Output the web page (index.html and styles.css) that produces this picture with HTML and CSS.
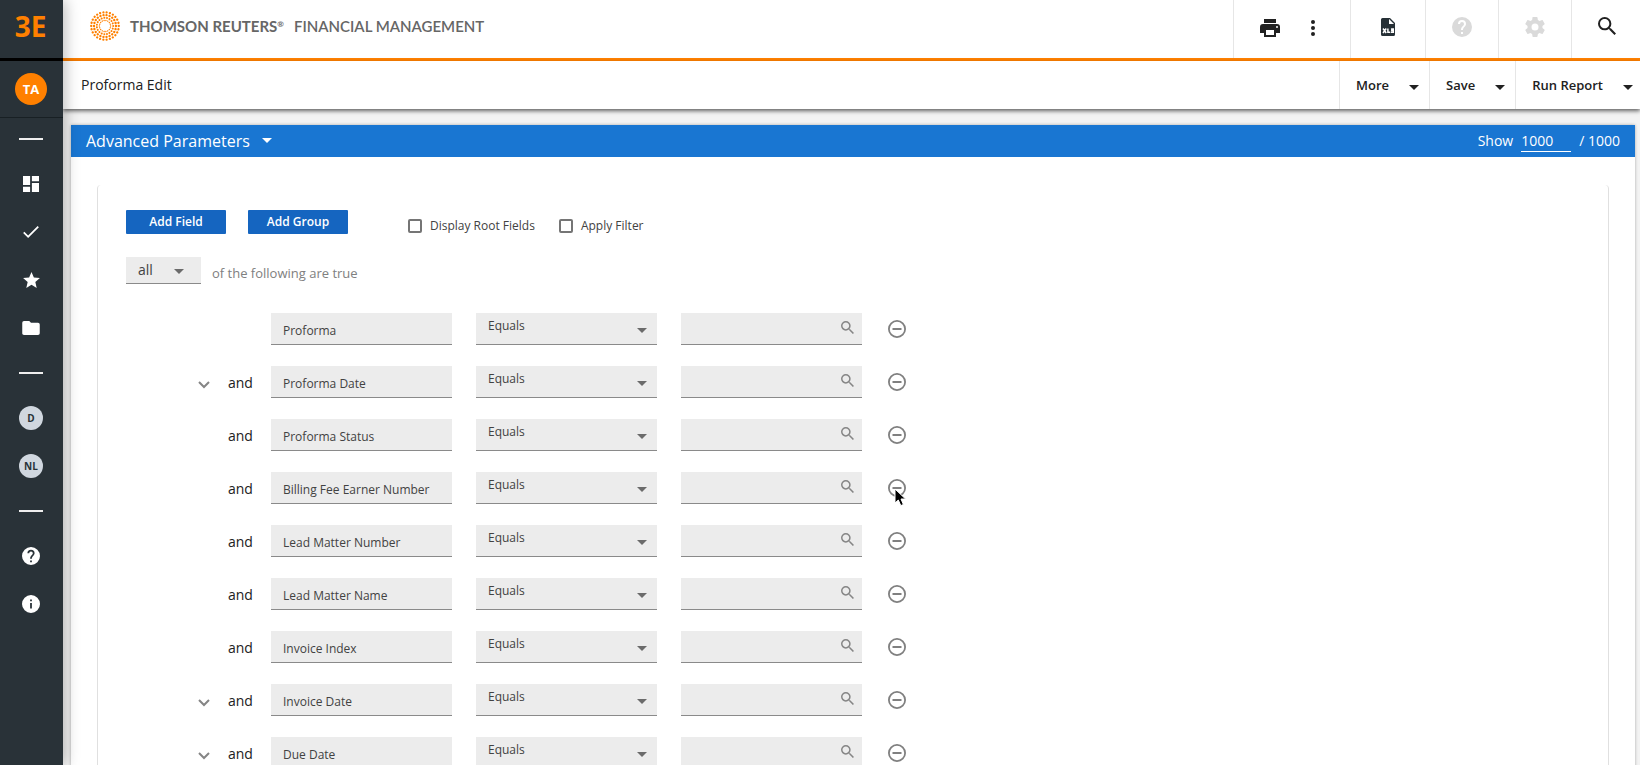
FILE: index.html
```html
<!DOCTYPE html>
<html lang="en">
<head>
<meta charset="utf-8">
<title>Proforma Edit</title>
<link rel="stylesheet" href="styles.css">
</head>
<body>
<svg class="sprite" aria-hidden="true">
  <symbol id="caret" viewBox="0 0 10 5"><path d="M0 0h10L5 5z"/></symbol>
  <symbol id="chevron" viewBox="0 0 12 8"><path d="M1 1l5 5 5-5" fill="none" stroke="currentColor" stroke-width="2"/></symbol>
  <symbol id="search" viewBox="3 3 17.5 17.5"><path d="M15.5 14h-.79l-.28-.27A6.47 6.47 0 0 0 16 9.500 6.500 6.500 0 1 0 9.500 16c1.610 0 3.090-.59 4.230-1.570l.27.28v.79l5 4.990L20.490 19l-4.990-5zm-6 0C7.010 14 5 11.990 5 9.500S7.010 5 9.500 5 14 7.010 14 9.500 11.990 14 9.500 14z"/></symbol>
  <symbol id="minus" viewBox="2 2 20 20"><path d="M7 11v2h10v-2H7zm5-9a10 10 0 1 0 0 20 10 10 0 0 0 0-20zm0 18a8 8 0 1 1 0-16 8 8 0 0 1 0 16z"/></symbol>
  <symbol id="help" viewBox="2 2 20 20"><path d="M12 2a10 10 0 1 0 0 20 10 10 0 0 0 0-20zm1 17h-2v-2h2v2zm2.070-7.750l-.9.920C13.450 12.900 13 13.500 13 15h-2v-.5c0-1.100.45-2.100 1.170-2.830l1.240-1.260c.37-.36.59-.86.59-1.410a2 2 0 1 0-4 0H8a4 4 0 1 1 8 0c0 .88-.36 1.680-.93 2.250z"/></symbol>
</svg>
<div class="app">
  <nav class="rail" aria-label="Main">
    <a class="rail-logo" href="#">3E</a>
    <div class="rail-user"><button class="avatar">TA</button></div>
    <ul class="rail-list">
      <li class="dash"></li>
      <li><button aria-label="Dashboard"><svg width="16" height="16" viewBox="3 3 18 18"><path d="M3 13h8V3H3v10zm0 8h8v-6H3v6zm10 0h8V11h-8v10zm0-18v6h8V3h-8z"/></svg></button></li>
      <li><button aria-label="Tasks"><svg width="16" height="12" viewBox="3.400 5.600 17.600 13.400"><path d="M9 16.200L4.800 12l-1.400 1.400L9 19 21 7l-1.400-1.400L9 16.200z"/></svg></button></li>
      <li><button aria-label="Favorites"><svg width="17" height="16" viewBox="2 2 20 19"><path d="M12 17.270L18.180 21l-1.640-7.030L22 9.240l-7.190-.61L12 2 9.190 8.630 2 9.240l5.460 4.730L5.820 21z"/></svg></button></li>
      <li><button aria-label="Folders"><svg width="18" height="14" viewBox="2 4 20 16"><path d="M10 4H4a2 2 0 0 0-2 2v12c0 1.100.9 2 2 2h16a2 2 0 0 0 2-2V8a2 2 0 0 0-2-2h-8l-2-2z"/></svg></button></li>
      <li class="dash"></li>
      <li><button class="chip">D</button></li>
      <li><button class="chip">NL</button></li>
      <li class="dash"></li>
      <li><button aria-label="Help"><svg width="18" height="18"><use href="#help"/></svg></button></li>
      <li><button aria-label="About"><svg width="18" height="18" viewBox="2 2 20 20"><path d="M12 2a10 10 0 1 0 0 20 10 10 0 0 0 0-20zm1 15h-2v-6h2v6zm0-8h-2V7h2v2z"/></svg></button></li>
    </ul>
  </nav>
  <div class="page">
    <header class="topbar">
      <div class="brand">
        <svg class="brand-mark" width="32" height="30" viewBox="-16 -15 32 30">
          <circle r="13.800" stroke-width="2.300" pathLength="26" stroke-dasharray="0.010 0.990"/>
          <circle r="11" stroke-width="2.400" pathLength="22" stroke-dasharray="0.010 0.990"/>
          <circle r="8.200" stroke-width="2" pathLength="19" stroke-dasharray="0.010 0.990"/>
          <circle r="5.600" stroke-width="1.400" pathLength="18" stroke-dasharray="0.010 0.990"/>
        </svg>
        <span class="brand-name">THOMSON REUTERS<sup>®</sup></span>
        <span class="brand-product">FINANCIAL MANAGEMENT</span>
      </div>
      <div class="tools">
        <div class="tool tool-pair">
          <button aria-label="Print"><svg width="20" height="18" viewBox="2 3 20 18"><path d="M19 8H5a3 3 0 0 0-3 3v6h4v4h12v-4h4v-6a3 3 0 0 0-3-3zm-3 11H8v-5h8v5zm3-7a1 1 0 1 1 0-2 1 1 0 0 1 0 2zm-1-9H6v4h12V3z"/></svg></button>
          <button aria-label="More actions"><svg width="4" height="16" viewBox="0 0 4 16"><circle cx="2" cy="2" r="2"/><circle cx="2" cy="8" r="2"/><circle cx="2" cy="14" r="2"/></svg></button>
        </div>
        <div class="tool tool-xls"><button aria-label="Export to XLS"><svg width="14" height="18" viewBox="0 0 14 18"><path fill="#263036" d="M1.500 0H9l5 5v11.500a1.500 1.500 0 0 1-1.500 1.500h-11A1.500 1.500 0 0 1 0 16.500v-15A1.500 1.500 0 0 1 1.500 0z"/><path fill="#fff" d="M8 1v5h5z"/><path fill="none" stroke="#fff" stroke-width="1.500" d="M2 10.500l3.200 4.500M5.200 10.500L2 15M6.900 10.500v3.800h2.400M13 11h-2.200v1.600h1.500v1.700H10"/></svg></button></div>
        <div class="tool"><button class="muted" disabled aria-label="Help"><svg width="20" height="20"><use href="#help"/></svg></button></div>
        <div class="tool"><button class="muted" disabled aria-label="Settings"><svg width="20" height="20" viewBox="2 2 20 20"><path d="M19.430 12.980c.04-.32.070-.64.070-.98s-.030-.66-.070-.98l2.110-1.650c.19-.15.240-.42.120-.64l-2-3.460c-.12-.22-.39-.3-.61-.22l-2.490 1c-.52-.4-1.080-.73-1.690-.98l-.38-2.650A.488.488 0 0 0 14 2h-4c-.25 0-.46.180-.49.420l-.38 2.650c-.61.250-1.170.59-1.690.98l-2.490-1c-.23-.09-.49 0-.61.220l-2 3.460c-.13.220-.070.490.12.640l2.110 1.650c-.04.320-.070.650-.070.980s.030.660.070.980l-2.110 1.650c-.19.150-.24.420-.12.640l2 3.460c.12.220.39.300.61.220l2.490-1c.52.400 1.080.73 1.690.98l.38 2.650c.030.240.240.420.490.420h4c.25 0 .46-.18.49-.42l.38-2.650c.61-.25 1.170-.59 1.690-.98l2.490 1c.23.090.49 0 .61-.22l2-3.460c.12-.22.070-.49-.12-.64l-2.110-1.650zM12 15.500a3.500 3.500 0 1 1 0-7 3.500 3.500 0 0 1 0 7z"/></svg></button></div>
        <div class="tool tool-last"><button aria-label="Search"><svg width="18" height="18"><use href="#search"/></svg></button></div>
      </div>
    </header>
    <div class="actionbar">
      <h1>Proforma Edit</h1>
      <div class="actions">
        <button>More <svg width="10" height="5"><use href="#caret"/></svg></button>
        <button>Save <svg width="10" height="5"><use href="#caret"/></svg></button>
        <button class="run">Run Report <svg width="10" height="5"><use href="#caret"/></svg></button>
      </div>
    </div>
    <main class="content">
      <section class="panel">
        <div class="panel-head">
          <button class="panel-title">Advanced Parameters <svg width="10" height="5"><use href="#caret"/></svg></button>
          <div class="limit"><label for="limit">Show</label><input id="limit" type="text" value="1000"><span>/ 1000</span></div>
        </div>
        <form class="panel-body">
          <div class="group">
            <div class="toolbar">
              <button type="button" class="primary">Add Field</button>
              <button type="button" class="primary">Add Group</button>
              <div class="checks">
                <label><input type="checkbox">Display Root Fields</label>
                <label><input type="checkbox">Apply Filter</label>
              </div>
            </div>
            <div class="match">
              <span class="picker picker-all"><select id="match"><option>all</option><option>any</option></select><svg width="10" height="5"><use href="#caret"/></svg></span>
              <label for="match">of the following are true</label>
            </div>
            <div class="rules" id="rules"></div>
          </div>
        </form>
      </section>
    </main>
  </div>
</div>
<script src="app.js"></script>
</body>
</html>
```
FILE: styles.css
```css
* { box-sizing: border-box; }
body {
  margin: 0;
  font-family: "Open Sans", "Noto Sans", sans-serif;
  font-size: 14px;
  color: #212121;
  background: #f3f3f3;
}
button, input, select { font: inherit; color: inherit; }
button { border: 0; padding: 0; background: none; display: flex; align-items: center; cursor: pointer; }
svg { display: block; flex: none; fill: currentColor; }
.sprite { position: absolute; width: 0; height: 0; }
.app { display: flex; height: 100vh; overflow: hidden; }

.rail {
  flex: none;
  width: 63px;
  background: #293238;
  color: #fff;
  box-shadow: 2px 0 14px rgba(0, 0, 0, .28);
  z-index: 2;
}
.rail-logo {
  display: flex;
  align-items: center;
  justify-content: center;
  height: 61px;
  padding: 0 2px 7px 0;
  border-bottom: 3px solid #000;
  color: #ff8000;
  font-size: 28px;
  font-weight: 700;
  text-decoration: none;
}
.rail-user { display: flex; justify-content: center; align-items: center; height: 57px; padding-right: 1px; border-bottom: 1px solid #182024; }
.avatar { justify-content: center; width: 32px; height: 32px; border-radius: 50%; background: #ff8000; color: #fff; font-weight: 700; font-size: 13px; }
.rail-list { list-style: none; margin: 0; padding: 0 1px 0 0; }
.rail-list li { display: flex; justify-content: center; align-items: center; height: 48px; }
.rail-list .dash { height: 42px; }
.dash::before { content: ""; width: 24px; height: 2px; background: #eee; }
.chip { justify-content: center; width: 24px; height: 24px; border-radius: 50%; background: #d0d7df; color: #293238; font-size: 10px; font-weight: 700; }

.page { flex: 1; min-width: 0; display: flex; flex-direction: column; }
.topbar { flex: none; display: flex; justify-content: space-between; height: 61px; background: #fff; border-bottom: 3px solid #ff8000; }
.brand { display: flex; align-items: center; padding: 0 0 6px 26px; color: #666; font-family: Lato, "Open Sans", sans-serif; font-size: 15px; white-space: nowrap; }
.brand-mark { fill: none; stroke: #ff8000; stroke-linecap: round; }
.brand-name { margin-left: 9px; font-weight: 700; }
.brand-name sup { font-size: 8px; line-height: 0; vertical-align: 5px; }
.brand-product { margin-left: 10px; font-weight: 600; }
.tools { display: flex; }
.tool { display: flex; align-items: center; justify-content: center; width: 73px; padding-bottom: 4px; border-left: 1px solid #e6e6e6; }
.tool-pair { width: 117px; gap: 31px; padding: 0 10px 2px 0; }
.tool-xls { width: 75px; }
.tool-last { width: 69px; padding: 0 0 6px 2px; }
.muted { color: #dadada; }

.actionbar { flex: none; display: flex; justify-content: space-between; height: 48px; background: #fff; box-shadow: 0 2px 4px rgba(0, 0, 0, .6); z-index: 1; }
.actionbar h1 { margin: 0; padding-left: 18px; font-size: 14px; font-weight: 400; line-height: 48px; }
.actions { display: flex; font-size: 13px; font-weight: 600; }
.actions button { gap: 20px; padding: 0 10px 0 16px; border-left: 1px solid #e6e6e6; }
.actions svg { margin-top: 5px; }
.actions .run { padding-right: 7px; }

.content { flex: 1; min-height: 0; padding: 16px 5px 0 8px; }
.panel { background: #fff; box-shadow: 0 0 3px rgba(0, 0, 0, .3); }
.panel-head { display: flex; justify-content: space-between; align-items: center; height: 32px; padding: 0 15px 1px; background: #1976d2; color: #fff; }
.panel-title { gap: 12px; font-size: 16px; font-weight: 500; }
.limit { display: flex; align-items: center; font-weight: 500; }
.limit input { width: 50px; height: 22px; margin: 0 8px; padding: 0; border: 0; border-bottom: 1px solid #fff; border-radius: 0; background: none; }
.panel-body { padding: 28px 26px 0; }
.group { padding: 25px 28px; border: solid #e0e0e0; border-width: 0 1px; border-radius: 4px 4px 0 0; }
.toolbar { display: flex; gap: 22px; }
.primary { justify-content: center; width: 100px; height: 24px; padding-bottom: 2px; border-radius: 1px; background: #1565c0; color: #fff; font-size: 12px; font-weight: 600; }
.checks { display: flex; gap: 24px; padding: 7px 0 0 38px; font-size: 12px; color: #424242; }
.checks label { display: flex; align-items: center; gap: 8px; }
.checks input { appearance: none; width: 14px; height: 14px; margin: 0; border: 2px solid #757575; border-radius: 2px; }
.match { display: flex; margin-top: 23px; gap: 11px; }
.match label { padding-top: 7px; font-size: 13px; line-height: 18px; color: #808080; }

.picker { position: relative; display: block; color: #424242; }
.picker select { appearance: none; display: block; width: 100%; height: 32px; padding: 0 30px 7px 12px; border: 0; border-bottom: 1px solid #8a8a8a; border-radius: 0; background: #ececec; font-size: 12px; }
.picker svg { position: absolute; right: 10px; top: 15px; color: #6b6b6b; pointer-events: none; }
.picker-all { width: 75px; }
.picker-all select { height: 27px; padding-bottom: 2px; font-size: 14px; }
.picker-all svg { right: 17px; top: 12px; }

.rules { display: grid; gap: 21px; margin-top: 29px; }
.rule { display: grid; grid-template-columns: 30px 43px repeat(3, 205px) 22px; align-items: center; height: 32px; padding-left: 72px; }
.expand { margin-top: 5px; color: #858585; grid-column: 1; }
.join { grid-column: 2; }
.rule .field, .rule .picker, .lookup { width: 181px; }
.field { grid-column: 3; height: 32px; padding: 3px 12px 0; border: 0; border-bottom: 1px solid #8a8a8a; border-radius: 0; background: #ececec; color: #424242; font-size: 12px; }
.lookup { position: relative; }
.lookup input { display: block; width: 100%; height: 32px; padding: 0 36px 0 12px; border: 0; border-bottom: 1px solid #8a8a8a; border-radius: 0; background: #ececec; }
.lookup button { position: absolute; right: 8px; top: 8px; color: #858585; }
.remove { position: relative; justify-self: center; color: #808080; }
.pointer { position: absolute; left: 6px; top: 9px; color: #000; }
```
FILE: app.js
```js
const rules = [
  ["Proforma", false], ["Proforma Date", true], ["Proforma Status", false],
  ["Billing Fee Earner Number", false], ["Lead Matter Number", false],
  ["Lead Matter Name", false], ["Invoice Index", false],
  ["Invoice Date", true], ["Due Date", true]
];
const pointer = '<svg class="pointer" width="14" height="20" viewBox="0 0 14 20"><path d="M1 1v14l3.300-3 2.500 5.600 2.600-1.100L7 11h4.600z" stroke="#fff" stroke-width="1"/></svg>';
document.getElementById("rules").innerHTML = rules.map(([name, expandable], i) => `
  <div class="rule">
    ${expandable ? `<button type="button" class="expand" aria-label="Expand ${name}"><svg width="12" height="8"><use href="#chevron"/></svg></button>` : ""}
    ${i ? '<span class="join">and</span>' : ""}
    <input class="field" type="text" readonly aria-label="Field" value="${name}">
    <span class="picker"><select aria-label="${name} operator"><option>Equals</option></select><svg width="10" height="5"><use href="#caret"/></svg></span>
    <span class="lookup"><input type="text" aria-label="${name} value"><button type="button" aria-label="Look up ${name}"><svg width="13" height="13"><use href="#search"/></svg></button></span>
    <button type="button" class="remove" aria-label="Remove ${name}"><svg width="18" height="18"><use href="#minus"/></svg>${i === 3 ? pointer : ""}</button>
  </div>`).join("");
```
